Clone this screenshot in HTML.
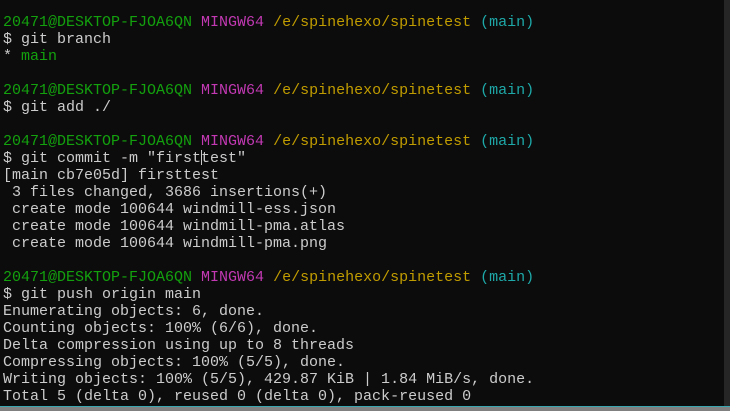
<!DOCTYPE html>
<html><head><meta charset="utf-8"><style>
html,body{margin:0;padding:0;background:#0c0c0c;}
body{width:730px;height:411px;overflow:hidden;position:relative;}
pre{margin:0;position:absolute;left:3px;top:14px;font-family:"Liberation Mono",monospace;font-size:15px;line-height:17px;color:#cccccc;white-space:pre;}
.g{color:#13a10e}
.m{color:#c239b3}
.y{color:#c19c00}
.c{color:#1ea8a8}
.cur{display:inline-block;width:1px;height:15px;background:#ccc;vertical-align:-3px;margin-right:-1px}
.sb{position:absolute;right:0;top:0;width:6px;height:406px;background:#262626}
.bl{position:absolute;left:0;bottom:0;width:730px;height:4px;background:#808080}
.tl{position:absolute;left:0;bottom:4px;width:730px;height:1px;background:#3aa6b0}
</style></head><body>
<pre><span class="g">20471@DESKTOP-FJOA6QN</span> <span class="m">MINGW64</span> <span class="y">/e/spinehexo/spinetest</span> <span class="c">(main)</span>
$ git branch
* <span class="g">main</span>

<span class="g">20471@DESKTOP-FJOA6QN</span> <span class="m">MINGW64</span> <span class="y">/e/spinehexo/spinetest</span> <span class="c">(main)</span>
$ git add ./

<span class="g">20471@DESKTOP-FJOA6QN</span> <span class="m">MINGW64</span> <span class="y">/e/spinehexo/spinetest</span> <span class="c">(main)</span>
$ git commit -m "first<span class="cur"></span>test"
[main cb7e05d] firsttest
 3 files changed, 3686 insertions(+)
 create mode 100644 windmill-ess.json
 create mode 100644 windmill-pma.atlas
 create mode 100644 windmill-pma.png

<span class="g">20471@DESKTOP-FJOA6QN</span> <span class="m">MINGW64</span> <span class="y">/e/spinehexo/spinetest</span> <span class="c">(main)</span>
$ git push origin main
Enumerating objects: 6, done.
Counting objects: 100% (6/6), done.
Delta compression using up to 8 threads
Compressing objects: 100% (5/5), done.
Writing objects: 100% (5/5), 429.87 KiB | 1.84 MiB/s, done.
Total 5 (delta 0), reused 0 (delta 0), pack-reused 0</pre>
<div class="sb"></div>
<div class="tl"></div>
<div class="bl"></div>
</body></html>
